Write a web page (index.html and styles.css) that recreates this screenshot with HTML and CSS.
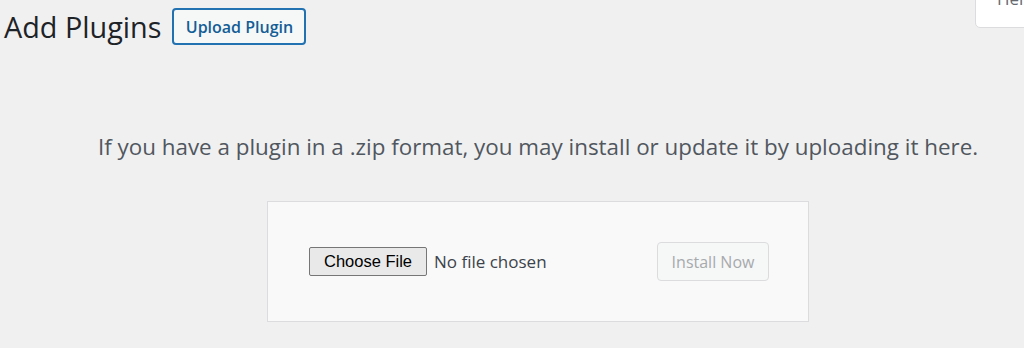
FILE: index.html
```html
<!DOCTYPE html>
<html lang="en">
<head>
<meta charset="utf-8">
<title>Add Plugins</title>
<link rel="stylesheet" href="styles.css">
</head>
<body>
<div class="help-tab"><span>Help</span></div>
<div class="wrap">
  <div class="page-head">
    <h1 class="page-title">Add Plugins</h1>
    <button class="upload-toggle" type="button">Upload Plugin</button>
  </div>
  <div class="upload-plugin">
    <p class="install-help">If you have a plugin in a .zip format, you may install or update it by uploading it here.</p>
    <form class="upload-form">
      <div class="file-field">
        <button class="choose-file" type="button">Choose File</button>
        <span class="file-status">No file chosen</span>
      </div>
      <button class="install-now" type="button" disabled>Install Now</button>
    </form>
  </div>
</div>
</body>
</html>
```
FILE: styles.css
```css
html, body {
  margin: 0;
  padding: 0;
  background: #f0f0f1;
  height: 100%;
  overflow: hidden;
}
body {
  font-family: "Open Sans", "Noto Sans", sans-serif;
  color: #3c434a;
  position: relative;
}
.help-tab {
  position: absolute;
  top: -12px;
  right: -30px;
  width: 79px;
  height: 40px;
  background: #fff;
  border: 1px solid #dcdcde;
  border-radius: 0 0 5px 5px;
  box-sizing: border-box;
  padding-left: 21px;
  font-size: 17px;
  line-height: 20px;
  color: #646970;
}
.wrap {
  padding-left: 4px;
}
.page-head {
  display: flex;
  align-items: center;
  gap: 11px;
  padding-top: 8px;
}
.page-title {
  margin: 0;
  font-size: 28.8px;
  font-weight: 400;
  color: #1d2327;
  line-height: 37px;
}
.upload-toggle {
  font-family: inherit;
  font-size: 16px;
  font-weight: 600;
  color: #135e96;
  background: #f6f7f7;
  border: 2px solid #2271b1;
  border-radius: 4px;
  height: 37px;
  width: 134px;
  padding: 0;
  box-sizing: border-box;
}
.upload-plugin {
  padding-left: 48px;
  text-align: center;
}
.install-help {
  margin: 87px 0 0;
  font-size: 22.4px;
  line-height: 30px;
  color: #50575e;
}
.upload-form {
  display: inline-flex;
  justify-content: space-between;
  align-items: center;
  width: 542px;
  height: 121px;
  box-sizing: border-box;
  margin-top: 39px;
  padding: 0 39px 0 41px;
  background: #f9f9f9;
  border: 1px solid #dcdcde;
  text-align: left;
}
.file-field {
  display: flex;
  align-items: center;
  gap: 7px;
}
.choose-file {
  font-family: "Liberation Sans", Arial, sans-serif;
  font-size: 16.5px;
  color: #000;
  background: #e9e9e9;
  border: 1px solid #767676;
  border-radius: 2px;
  height: 29px;
  width: 118px;
  padding: 0;
}
.file-status {
  font-size: 17px;
  color: #3c434a;
}
.install-now {
  font-family: inherit;
  font-size: 16px;
  color: #a7aaad;
  background: #f6f7f7;
  border: 1px solid #dcdcde;
  border-radius: 4px;
  width: 112px;
  height: 39px;
  padding: 0;
}
```
